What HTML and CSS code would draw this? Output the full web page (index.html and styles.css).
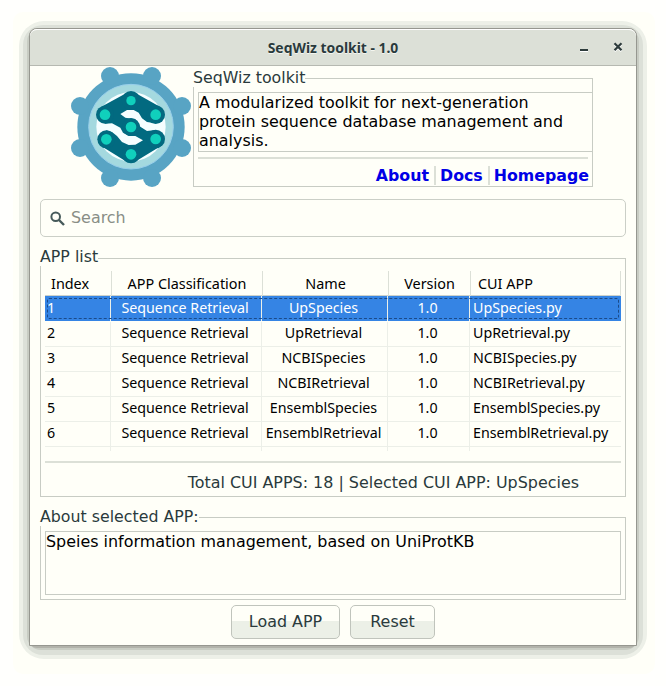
FILE: index.html
```html
<!DOCTYPE html>
<html lang="en">
<head>
<meta charset="utf-8">
<title>SeqWiz toolkit - 1.0</title>
<link rel="stylesheet" href="styles.css">
</head>
<body>
<div class="halo"><div class="shade shade-outer"><div class="shade shade-mid"><div class="shade shade-inner"><div class="shade shade-core">
<main class="window">
  <header class="titlebar">
    <h1>SeqWiz toolkit - 1.0</h1>
    <div class="controls">
      <svg width="10" height="12" viewBox="0 0 10 12"><path d="M1 8h8v2H1z" fill="#2e3c3c"/><path d="M1 10.5h8" stroke="#fff"/></svg>
      <svg width="10" height="12" viewBox="0 0 10 12"><path d="M1.5 3.2l7 7m0-7l-7 7" stroke="#fff" stroke-width="2.2"/><path d="M1.5 2.2l7 7m0-7l-7 7" stroke="#2e3c3c" stroke-width="2.2"/></svg>
    </div>
  </header>
  <div class="content">
    <div class="intro">
      <svg class="logo" width="122" height="122" viewBox="30 18 366 366">
        <g fill="#58a4c4"><circle cx="213" cy="201" r="161"/><circle cx="150" cy="48" r="27"/><circle cx="276" cy="48" r="27"/><circle cx="366" cy="138" r="27"/><circle cx="366" cy="264" r="27"/><circle cx="276" cy="354" r="27"/><circle cx="150" cy="354" r="27"/><circle cx="60" cy="264" r="27"/><circle cx="60" cy="138" r="27"/></g>
        <circle cx="213" cy="200" r="127" fill="#a4d9df" stroke="#98cfeb" stroke-width="3"/>
        <circle cx="213" cy="200" r="104" fill="#f5feff"/>
        <g fill="#026a80"><path d="M124 140L201 98L225 98L297 139L287 190L261 186L246 175L236 158L221 150L201 150L181 162L196 173L226 178L241 200L261 213L287 210L304 257L224 306L201 306L127 260L139 211L156 216L171 228L186 246L206 255L226 254L249 241L226 228L206 228L189 218L181 203L156 190L135 191Z"/>
        <circle cx="213" cy="121" r="28"/><circle cx="135" cy="164" r="27"/><circle cx="287" cy="164" r="28"/><circle cx="213" cy="201" r="27"/><circle cx="139" cy="238" r="27"/><circle cx="287" cy="237" r="28"/><circle cx="213" cy="283" r="27"/></g>
        <g fill="#10d0bc"><circle cx="213" cy="122" r="14"/><circle cx="135" cy="164" r="16"/><circle cx="287" cy="164" r="16"/><circle cx="213" cy="201" r="16"/><circle cx="139" cy="238" r="16"/><circle cx="287" cy="237" r="16"/><circle cx="213" cy="283" r="16"/></g>
      </svg>
      <section class="frame about">
        <h2>SeqWiz toolkit</h2>
        <p class="blurb">A modularized toolkit for next-generation<br>protein sequence database management and<br>analysis.</p>
        <hr>
        <nav><a>About</a><a>Docs</a><a>Homepage</a></nav>
      </section>
    </div>
    <div class="search">
      <svg width="15" height="15" viewBox="0 0 15 15" fill="none" stroke="#465a5a"><circle cx="5.7" cy="5.7" r="4.3" stroke-width="2"/><path d="M9 9l5 5" stroke-width="2.4"/></svg>
      <span>Search</span>
    </div>
    <section class="frame apps">
      <h2>APP list</h2>
      <div class="table">
        <div class="row head"><span>Index</span><span>APP Classification</span><span>Name</span><span>Version</span><span>CUI APP</span></div>
        <div class="row selected"><span>1</span><span>Sequence Retrieval</span><span>UpSpecies</span><span>1.0</span><span>UpSpecies.py</span></div>
        <div class="row"><span>2</span><span>Sequence Retrieval</span><span>UpRetrieval</span><span>1.0</span><span>UpRetrieval.py</span></div>
        <div class="row"><span>3</span><span>Sequence Retrieval</span><span>NCBISpecies</span><span>1.0</span><span>NCBISpecies.py</span></div>
        <div class="row"><span>4</span><span>Sequence Retrieval</span><span>NCBIRetrieval</span><span>1.0</span><span>NCBIRetrieval.py</span></div>
        <div class="row"><span>5</span><span>Sequence Retrieval</span><span>EnsemblSpecies</span><span>1.0</span><span>EnsemblSpecies.py</span></div>
        <div class="row"><span>6</span><span>Sequence Retrieval</span><span>EnsemblRetrieval</span><span>1.0</span><span>EnsemblRetrieval.py</span></div>
        <div class="row stub"><span></span><span></span><span></span><span></span><span></span></div>
      </div>
      <hr>
      <p class="status">Total CUI APPS: 18 | Selected CUI APP: UpSpecies</p>
    </section>
    <section class="frame detail">
      <h2>About selected APP:</h2>
      <p>Speies information management, based on UniProtKB</p>
    </section>
    <div class="actions"><button class="load">Load APP</button><button class="reset">Reset</button></div>
  </div>
</main>
</div></div></div></div></div>
</body>
</html>
```
FILE: styles.css
```css
* { box-sizing: border-box; margin: 0; padding: 0; }
body {
  padding: 12px 0 0 13px;
  background: #fffffd;
  color: #2a3a3c;
  font: 15.93px/19px "DejaVu Sans", sans-serif;
  overflow: hidden;
}
.halo { width: 642px; height: 662px; padding: 9px 0 0 6px; border-radius: 10px; background: #fffff8; }
.shade-outer { width: 628px; height: 638px; padding: 4px; border-radius: 25px; background: #edf0e8; }
.shade-mid { height: 630px; padding: 4px; border-radius: 20px; background: #dce0d8; }
.shade-inner { height: 622px; padding: 0 2px; border-radius: 14px; background: #c8ccc3; }
.shade-core { height: 620px; border-radius: 8px; background: #b2b3ab; }
.window {
  width: 608px;
  height: 618px;
  margin-top: -1px;
  border: 1px solid #969790;
  border-radius: 8px 8px 0 0;
  background: #fffff8;
}
.titlebar {
  position: relative;
  height: 37px;
  border-top: 1px solid #fff;
  border-bottom: 1px solid #b6b9b1;
  border-radius: 7px 7px 0 0;
  background: #dce0d7;
}
.titlebar h1 {
  text-align: center;
  font: bold 13.9px/36px "Noto Sans", sans-serif;
  text-shadow: 0 1px #f4f6f0;
}
.controls { position: absolute; right: 13px; top: 11px; display: flex; gap: 24px; }
.content { padding: 0 10px; }
.intro { display: flex; height: 133px; padding-left: 30px; }
.logo { flex: none; margin-right: 1px; }
.frame { border: 1px solid #c8ccc4; }
.frame h2 {
  width: max-content;
  margin: -11px 0 0 -1px;
  font-size: 15.8px;
  font-weight: normal;
  line-height: 19px;
  background: #fffff8;
}
hr { height: 2px; border: 0; background: #dce0d7; }
.about { width: 400px; height: 109px; margin-top: 12px; }
.blurb {
  height: 60px;
  margin: 5px -1px 5px 4px;
  border: 1px solid #c8ccc4;
  color: #000;
}
.about hr { margin: 0 4px; }
nav {
  display: flex;
  justify-content: flex-end;
  padding: 7px 3px 0 0;
  color: #0000e6;
  font-size: 15.8px;
  font-weight: bold;
}
nav a + a { margin-left: 5px; padding-left: 4px; border-left: 2px solid #dce0d7; }
.search {
  display: flex;
  align-items: center;
  gap: 6px;
  height: 38px;
  padding-left: 9px;
  border: 1px solid #cbcfc7;
  border-radius: 5px;
  color: #898e86;
}
.search span { padding-bottom: 2px; }
.apps { height: 239px; margin-top: 21px; padding: 0 4px; }
.apps h2, .detail h2 { margin-left: -5px; }
.apps h2 { margin-top: -12px; }
.table {
  margin-top: 5px;
  color: #000;
  font: 14.25px/22px "Noto Sans", sans-serif;
}
.row {
  display: grid;
  grid-template-columns: 66px 151px 126px 82px 151px;
  height: 25px;
  border-bottom: 1px solid #ecefe8;
}
.row span { padding-right: 2px; border-right: 1px solid #ecefe8; text-align: center; white-space: nowrap; }
.row span:first-child { padding-left: 2px; text-align: left; }
.row span:last-child { padding-left: 3px; border-right-color: transparent; text-align: left; }
.row.head { grid-template-columns: 67px 151px 126px 82px 150px; border-color: #ced2ca; font-size: 14.4px; }
.row.head span { padding-right: 0; line-height: 26px; border-color: #dce0d7; }
.row.head span:first-child { padding-left: 6px; }
.row.head span:last-child { padding-left: 7px; }
.row.selected {
  position: relative;
  height: 26px;
  border-color: #fffff8;
  background: #3584e4;
  background-clip: padding-box;
  color: #fff;
  line-height: 24px;
}
.row.selected::after { content: ""; position: absolute; inset: 2px; border: 1px dashed #1b4b89; border-radius: 2px; }
.row.stub { height: 4px; border: 0; }
.apps hr { margin-top: 10px; }
.status { margin-top: 10px; padding-right: 42px; text-align: right; }
.detail { height: 83px; margin-top: 20px; padding: 0 4px; }
.detail p { height: 64px; margin-top: 5px; border: 1px solid #c8ccc4; color: #000; }
.actions { display: flex; justify-content: center; gap: 10px; margin-top: 5px; }
.actions button {
  height: 34px;
  padding-bottom: 2px;
  border: 1px solid #c0c4bc;
  border-radius: 5px;
  background: linear-gradient(#fffff8 47%, #ecf0e7 47%);
  color: #2a3a3c;
  font: inherit;
}
.load { width: 109px; }
.reset { width: 85px; }
```
